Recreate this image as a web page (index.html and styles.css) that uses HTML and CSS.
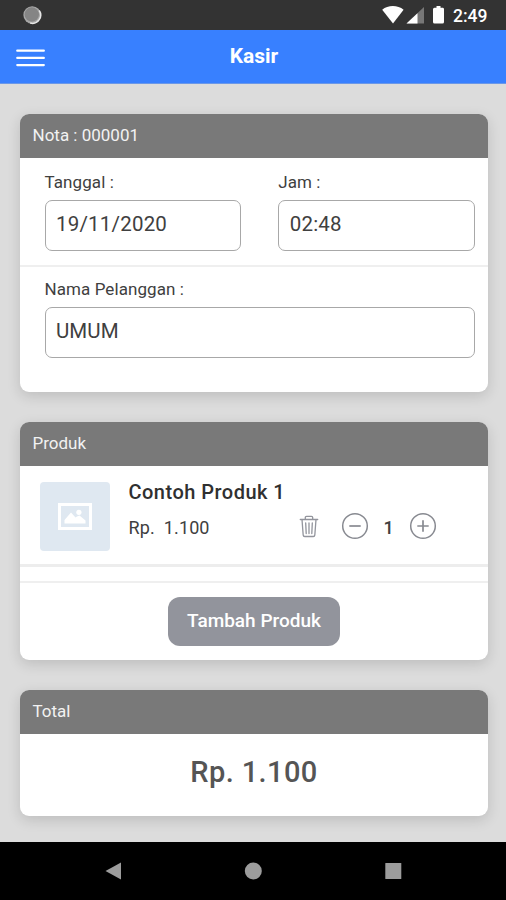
FILE: index.html
```html
<!DOCTYPE html>
<html lang="id">
<head>
<meta charset="utf-8">
<title>Kasir</title>
<link rel="stylesheet" href="styles.css">
</head>
<body>
<div class="statusbar">
  <svg class="sync" width="20" height="20" viewBox="0 0 20 20"><circle cx="10.2" cy="10" r="8.8" fill="#a8a8a8"/><path d="M17.200 5.500a8.200 8.200 0 0 1-9 12.500" fill="none" stroke="#e6e6e6" stroke-width="1.500"/><circle cx="9.800" cy="9.500" r="7.200" fill="#858585"/></svg>
  <svg class="signals" width="62" height="22" viewBox="0 0 62 22" fill="#fff">
    <path d="M0.200 5.800C6 .800 15.600.800 21.600 5.800L11 19.500z"/>
    <path d="M42 3v16.500H24.500z" fill="#777"/><path d="M35.500 9.200v10.300H24.500z"/>
    <path d="M54.500 2h4v1.700H61a1.600 1.600 0 0 1 1 1.500v12.800a1.500 1.500 0 0 1-1.500 1.500h-8a1.500 1.500 0 0 1-1.500-1.500V5.200a1.500 1.500 0 0 1 1.500-1.500h2z"/>
  </svg>
  <span class="clock">2:49</span>
</div>
<header class="toolbar">
  <svg class="menu" width="30" height="20" viewBox="0 0 30 20" stroke="#fff" stroke-width="2.300" stroke-linecap="round"><path d="M2.300 2.700h26.500M2.300 9.900h26.500M2.300 17.100h26.500"/></svg>
  <h1>Kasir</h1>
</header>
<main>
  <section class="card nota">
    <h2>Nota : 000001</h2>
    <div class="row datetime">
      <label><span>Tanggal :</span><span class="field date">19/11/2020</span></label>
      <label><span>Jam :</span><span class="field time">02:48</span></label>
    </div>
    <div class="row customer">
      <label><span>Nama Pelanggan :</span><span class="field name">UMUM</span></label>
    </div>
  </section>
  <section class="card produk">
    <h2>Produk</h2>
    <div class="item">
      <div class="thumb">
        <svg width="34" height="27" viewBox="0 0 34 27"><rect x="1.500" y="1.500" width="31" height="24" fill="none" stroke="#fff" stroke-width="3"/><path d="M6.500 20.500v-3.500l6.500-7.500 4.500 5 1.500-1 2.500-1 6 5v3z" fill="#fff"/><circle cx="20.900" cy="9.300" r="2.600" fill="#fff"/></svg>
      </div>
      <div class="info">
        <div class="title">Contoh Produk 1</div>
        <div class="line">
          <span class="price">Rp.&nbsp; 1.100</span>
          <svg class="trash" width="20" height="23" viewBox="0 0 20 23" fill="none" stroke="#92949c" stroke-width="1.300" stroke-linecap="round" stroke-linejoin="round"><path d="M1.300 4.500h17.400M3 4.500l1.200 15.700a1.500 1.500 0 0 0 1.500 1.300h8.600a1.500 1.500 0 0 0 1.500-1.300L17 4.500M6.300 4.500V2.600a1.200 1.200 0 0 1 1.200-1.200h5a1.200 1.200 0 0 1 1.200 1.200v1.900M6.700 8l.5 10.500M10 8v10.500M13.300 8l-.5 10.500"/></svg>
          <svg class="minus" width="28" height="28" viewBox="0 0 28 28" fill="none" stroke="#888a91"><circle cx="14" cy="14" r="12.300" stroke-width="1.500"/><path d="M8.300 14h11.400" stroke-width="1.700"/></svg>
          <span class="qty">1</span>
          <svg class="plus" width="28" height="28" viewBox="0 0 28 28" fill="none" stroke="#888a91"><circle cx="14" cy="14" r="12.300" stroke-width="1.500"/><path d="M8.300 14h11.400M14 8.300v11.400" stroke-width="1.700"/></svg>
        </div>
      </div>
    </div>
    <div class="spacer"></div>
    <div class="action"><button type="button">Tambah Produk</button></div>
  </section>
  <section class="card total">
    <h2>Total</h2>
    <div class="amount">Rp. 1.100</div>
  </section>
</main>
<nav class="navbar">
  <svg width="18" height="20" viewBox="0 0 18 20" fill="#9c9c9c"><path d="M1.500 10 17 1.500v17z"/></svg>
  <svg width="18" height="18" viewBox="0 0 18 18" fill="#9c9c9c"><circle cx="9.300" cy="9" r="8.500"/></svg>
  <svg width="18" height="18" viewBox="0 0 18 18" fill="#9c9c9c"><rect x="1.300" y="1" width="16" height="16" rx=".5"/></svg>
</nav>
</body>
</html>
```
FILE: styles.css
```css
* { box-sizing: border-box; }
body {
  margin: 0;
  width: 506px;
  height: 900px;
  display: flex;
  flex-direction: column;
  overflow: hidden;
  background: #dcdcdc;
  color: #404040;
  font-family: Roboto, "Liberation Sans", sans-serif;
}
svg { display: block; flex: none; }
.statusbar {
  height: 30px;
  background: #333;
  display: flex;
  align-items: center;
  padding: 0 19px 0 22px;
}
.signals { margin-left: auto; overflow: visible; }
.clock {
  width: 34px;
  margin-left: 9px;
  padding-top: 1px;
  color: #fff;
  font-size: 17.500px;
  font-weight: 500;
  white-space: nowrap;
}
.toolbar {
  height: 54px;
  background: #3880ff;
  border-bottom: 1px solid #6b98e8;
  display: grid;
  grid-template-columns: 46px 1fr 46px;
  align-items: center;
  color: #fff;
}
.menu { margin: 2px 0 0 15px; }
h1 {
  margin: 0 0 2px 2px;
  text-align: center;
  font-size: 21px;
  line-height: 24px;
  font-weight: 700;
}
main {
  flex: 1;
  padding: 30px 18px 0 20px;
  display: flex;
  flex-direction: column;
  gap: 30px;
}
.card {
  background: #fff;
  border-radius: 9px;
  box-shadow: 0 4px 14px rgba(0, 0, 0, .14);
}
.nota { height: 278px; }
.produk { height: 238px; }
.total { height: 126px; }
h2 {
  margin: 0;
  height: 44px;
  padding: 0 12.500px;
  border-radius: 9px 9px 0 0;
  background: #797979;
  color: #f2f2f2;
  font-size: 17px;
  font-weight: 400;
  line-height: 42px;
}
.row {
  padding: 13px 13px 0 24.500px;
  display: grid;
}
.datetime {
  grid-template-columns: 1fr 1fr;
  gap: 37px;
  height: 109px;
  border-bottom: 2px solid #efefef;
}
.datetime .field { margin-top: 7px; }
.customer { padding-top: 11px; }
label { font-size: 17px; line-height: 22px; letter-spacing: .08px; }
label > span { display: block; }
.field {
  height: 51px;
  margin-top: 7px;
  padding-left: 10.500px;
  border: 1px solid #a8a8a8;
  border-radius: 7px;
  font-size: 20.500px;
  line-height: 47px;
}
.date, .time { letter-spacing: .2px; }
.item {
  height: 101px;
  padding: 16px 20px 0 19.500px;
  border-bottom: 3px solid #ededed;
  display: flex;
  gap: 19px;
}
.thumb {
  width: 70px;
  height: 69px;
  border-radius: 4px;
  background: #dfe8f1;
  display: grid;
  place-items: center;
}
.info { flex: 1; }
.title {
  color: #303030;
  font-size: 20px;
  line-height: 20px;
  font-weight: 500;
  letter-spacing: .48px;
}
.line {
  display: flex;
  align-items: center;
  height: 28px;
  margin-top: 10px;
}
.price { width: 170px; padding-top: 3px; font-size: 18px; letter-spacing: .1px; }
.minus { margin-left: 22px; }
.qty { width: 40px; padding-top: 3px; text-align: center; font-size: 18px; font-weight: 500; }
.spacer { height: 15.500px; border-bottom: 2px solid #efefef; }
.action { display: flex; justify-content: center; padding-top: 14px; }
button {
  width: 172px;
  height: 49px;
  padding: 0;
  border: 0;
  border-radius: 12px;
  background: #92949c;
  color: #fff;
  font: 500 19px/48px Roboto, "Liberation Sans", sans-serif;
}
.amount {
  text-align: center;
  color: #555;
  font-size: 29px;
  line-height: 34px;
  font-weight: 500;
  letter-spacing: .4px;
  padding-top: 21px;
}
.navbar {
  height: 58px;
  background: #000;
  display: flex;
  align-items: center;
  justify-content: space-between;
  padding: 0 104px;
}
```
